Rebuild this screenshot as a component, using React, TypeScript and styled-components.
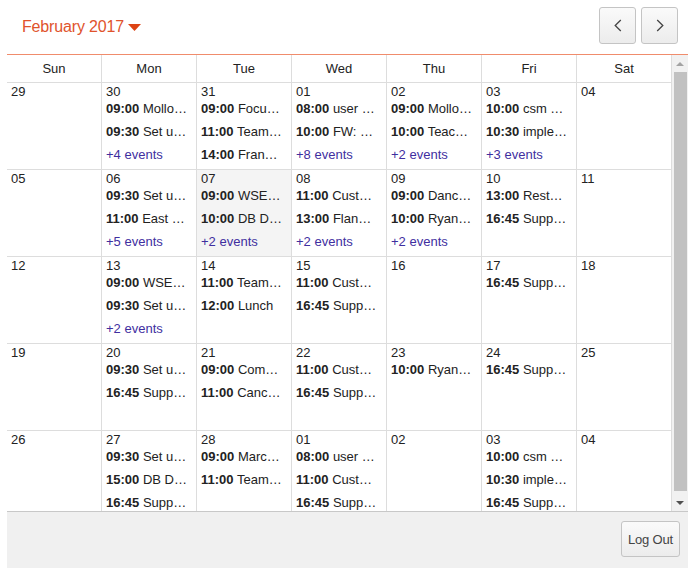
import React from 'react'
import styled, { createGlobalStyle } from 'styled-components'

const GlobalStyle = createGlobalStyle`
    html, body {
        margin: 0;
        padding: 0;
        background: #ffffff;
        overflow: hidden;
    }
    body {
        font-family: "Liberation Sans", Arial, sans-serif;
        font-size: 13px;
        color: #222222;
    }
`

const Page = styled.div`
    width: 681px;
    height: 568px;
    margin: 0 0 0 7px;
    display: flex;
    flex-direction: column;
`

const Toolbar = styled.div`
    height: 55px;
    flex: none;
    display: flex;
    justify-content: space-between;
    align-items: flex-start;
    padding: 7px 10px 0 15px;
    box-sizing: border-box;
    border-bottom: 1px solid #f08c6c;
`

const MonthTitle = styled.div`
    display: flex;
    align-items: center;
    gap: 4px;
    height: 40px;
    font-size: 16px;
    letter-spacing: -0.15px;
    color: #e0532c;
`

const NavButtons = styled.div`
    display: flex;
    gap: 5px;
`

const Button = styled.button`
    box-sizing: border-box;
    border: 1px solid #c4c4c4;
    border-radius: 3px;
    background: linear-gradient(#fafafa, #ececec);
    color: #444444;
    font-family: inherit;
    padding: 0;
    display: flex;
    align-items: center;
    justify-content: center;
`

const NavButton = styled(Button)`
    width: 37px;
    height: 37px;
`

const Body = styled.div`
    flex: 1;
    min-height: 0;
    display: flex;
`

const Calendar = styled.div`
    width: 665px;
    flex: none;
    overflow: hidden;
`

const Weekdays = styled.div`
    display: grid;
    grid-template-columns: repeat(7, 95px);
    height: 28px;
    border-bottom: 1px solid #dddddd;
    box-sizing: border-box;
`

const Weekday = styled.div`
    text-align: center;
    line-height: 27px;
    border-right: 1px solid #dddddd;
`

const Week = styled.div`
    display: grid;
    grid-template-columns: repeat(7, 95px);
    height: 87px;
    box-sizing: border-box;
    border-bottom: 1px solid #dddddd;
`

const Day = styled.div<{ $today?: boolean }>`
    min-width: 0;
    padding: 1px 0 0 4px;
    border-right: 1px solid #dddddd;
    background: ${({ $today }) => ($today ? '#f4f4f4' : 'transparent')};
`

const DayNumber = styled.div`
    line-height: 16px;
    margin-bottom: 1px;
`

const Event = styled.div`
    width: 82px;
    height: 16px;
    line-height: 16px;
    margin-bottom: 7px;
    white-space: nowrap;
    overflow: hidden;
    text-overflow: ellipsis;
`

const Time = styled.b`
    font-weight: bold;
`

const More = styled.div`
    line-height: 16px;
    color: #3f2f9f;
`

const ScrollTrack = styled.div`
    width: 16px;
    flex: none;
    background: #f1f1f1;
    display: flex;
    flex-direction: column;
    align-items: center;
`

const ScrollArrow = styled.div`
    height: 17px;
    flex: none;
    display: flex;
    align-items: center;
    justify-content: center;
`

const ScrollThumb = styled.div`
    width: 13px;
    flex: 1;
    margin: 0 1px 3px 2px;
    background: #c1c1c1;
`

const Footer = styled.div`
    height: 57px;
    flex: none;
    box-sizing: border-box;
    background: #f0f0f0;
    border-top: 1px solid #c8c8c8;
    display: flex;
    justify-content: flex-end;
    align-items: flex-start;
    padding: 9px 8px 0 0;
`

const LogOut = styled(Button)`
    width: 59px;
    height: 36px;
    font-size: 13px;
    letter-spacing: -0.2px;
`

type DayData = {
    date: string,
    today?: boolean,
    events?: [string, string][],
    more?: number,
}

const weekdays = ['Sun', 'Mon', 'Tue', 'Wed', 'Thu', 'Fri', 'Sat']

const weeks: DayData[][] = [
    [
        { date: '29' },
        { date: '30', events: [['09:00', 'Mollom review'], ['09:30', 'Set up demo']], more: 4 },
        { date: '31', events: [['09:00', 'Focus group'], ['11:00', 'Team meeting'], ['14:00', 'Frank call']] },
        { date: '01', events: [['08:00', 'user training'], ['10:00', 'FW: planning']], more: 8 },
        { date: '02', events: [['09:00', 'Mollom review'], ['10:00', 'Teach session']], more: 2 },
        { date: '03', events: [['10:00', 'csm meeting today'], ['10:30', 'implementation']], more: 3 },
        { date: '04' },
    ],
    [
        { date: '05' },
        { date: '06', events: [['09:30', 'Set up demo'], ['11:00', 'East team call']], more: 5 },
        { date: '07', today: true, events: [['09:00', 'WSEM standup'], ['10:00', 'DB Design review']], more: 2 },
        { date: '08', events: [['11:00', 'Customer call'], ['13:00', 'Flanders call']], more: 2 },
        { date: '09', events: [['09:00', 'Dance class'], ['10:00', 'Ryan meeting']], more: 2 },
        { date: '10', events: [['13:00', 'Restaurant'], ['16:45', 'Support shift']] },
        { date: '11' },
    ],
    [
        { date: '12' },
        { date: '13', events: [['09:00', 'WSEM standup'], ['09:30', 'Set up demo']], more: 2 },
        { date: '14', events: [['11:00', 'Team meeting'], ['12:00', 'Lunch']] },
        { date: '15', events: [['11:00', 'Customer call'], ['16:45', 'Support shift']] },
        { date: '16' },
        { date: '17', events: [['16:45', 'Support shift']] },
        { date: '18' },
    ],
    [
        { date: '19' },
        { date: '20', events: [['09:30', 'Set up demo'], ['16:45', 'Support shift']] },
        { date: '21', events: [['09:00', 'Company news'], ['11:00', 'Cancelled call']] },
        { date: '22', events: [['11:00', 'Customer call'], ['16:45', 'Support shift']] },
        { date: '23', events: [['10:00', 'Ryan meeting']] },
        { date: '24', events: [['16:45', 'Support shift']] },
        { date: '25' },
    ],
    [
        { date: '26' },
        { date: '27', events: [['09:30', 'Set up demo'], ['15:00', 'DB Design review'], ['16:45', 'Support shift']] },
        { date: '28', events: [['09:00', 'March planning'], ['11:00', 'Team meeting']] },
        { date: '01', events: [['08:00', 'user training'], ['11:00', 'Customer call'], ['16:45', 'Support shift']] },
        { date: '02' },
        { date: '03', events: [['10:00', 'csm meeting today'], ['10:30', 'implementation'], ['16:45', 'Support shift']] },
        { date: '04' },
    ],
]

const App = () => (
    <Page>
        <GlobalStyle />
        <Toolbar>
            <MonthTitle>
                February 2017
                <svg width="13" height="7" viewBox="0 0 13 7">
                    <path d="M0 0h13L6.5 7z" fill="#dd4314" />
                </svg>
            </MonthTitle>
            <NavButtons>
                <NavButton aria-label="Previous">
                    <svg width="8" height="13" viewBox="0 0 8 13" fill="none" stroke="#444" strokeWidth="1.3">
                        <path d="M6.8 1L1.2 6.5l5.6 5.5" />
                    </svg>
                </NavButton>
                <NavButton aria-label="Next">
                    <svg width="8" height="13" viewBox="0 0 8 13" fill="none" stroke="#444" strokeWidth="1.3">
                        <path d="M1.2 1l5.6 5.5L1.2 12" />
                    </svg>
                </NavButton>
            </NavButtons>
        </Toolbar>
        <Body>
            <Calendar>
                <Weekdays>
                    {weekdays.map((name) => (
                        <Weekday key={name}>{name}</Weekday>
                    ))}
                </Weekdays>
                {weeks.map((week, i) => (
                    <Week key={i}>
                        {week.map((day) => (
                            <Day key={day.date} $today={day.today}>
                                <DayNumber>{day.date}</DayNumber>
                                {day.events?.map(([time, title]) => (
                                    <Event key={time}>
                                        <Time>{time}</Time> {title}
                                    </Event>
                                ))}
                                {day.more != null && <More>+{day.more} events</More>}
                            </Day>
                        ))}
                    </Week>
                ))}
            </Calendar>
            <ScrollTrack>
                <ScrollArrow>
                    <svg width="8" height="4" viewBox="0 0 8 4"><path d="M4 0l4 4H0z" fill="#a3a3a3" /></svg>
                </ScrollArrow>
                <ScrollThumb />
                <ScrollArrow>
                    <svg width="8" height="4" viewBox="0 0 8 4"><path d="M0 0h8L4 4z" fill="#505050" /></svg>
                </ScrollArrow>
            </ScrollTrack>
        </Body>
        <Footer>
            <LogOut>Log Out</LogOut>
        </Footer>
    </Page>
)

export default App
